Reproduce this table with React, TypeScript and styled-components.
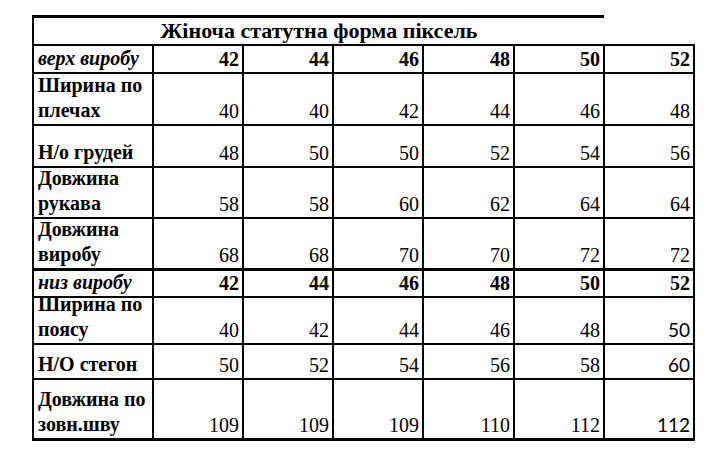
import React, { Fragment } from 'react';
import styled, { createGlobalStyle, css } from 'styled-components';

const GlobalStyle = createGlobalStyle`
    html, body {
        margin: 0;
        padding: 0;
        background: #fff;
        font-family: "Liberation Serif", "Times New Roman", serif;
        color: #000;
    }
`;

const Page = styled.div`
    width: 720px;
    height: 453px;
    padding: 15px 0 0 32px;
    box-sizing: border-box;
    overflow: hidden;
`;

const Sheet = styled.div`
    display: flex;
    flex-direction: column;
    width: 663px;
`;

const TitleBar = styled.div`
    width: 572px;
    height: 29px;
    box-sizing: border-box;
    border-top: 3px solid #000;
    border-left: 2px solid #000;
    display: flex;
    align-items: flex-end;
    justify-content: center;
    padding-bottom: 1px;
    font-weight: bold;
    font-size: 22px;
    line-height: 24px;
`;

// black background shows through the gaps as the cell borders
const Grid = styled.div`
    display: grid;
    grid-template-columns: 118px 88px 88px 88px 89px 88px 88px;
    grid-template-rows: 26px 50px 40px 49px 49px 26px 45px 33px 58px;
    gap: 2px;
    padding: 2px 2px 3px 2px;
    background: #000;
`;

const cellBase = css<{ $thickTop?: boolean }>`
    background: #fff;
    display: flex;
    align-items: flex-end;
    box-sizing: border-box;
    border-top: ${(p) => (p.$thickTop ? '1px solid #000' : 'none')};
`;

const LabelCell = styled.div<{ $italic?: boolean; $thickTop?: boolean }>`
    ${cellBase}
    padding: 0 2px 1px 4px;
    font-weight: bold;
    font-style: ${(p) => (p.$italic ? 'italic' : 'normal')};
    font-size: 20px;
    line-height: 25px;
`;

const NumCell = styled.div<{ $bold?: boolean; $sans?: boolean; $thickTop?: boolean }>`
    ${cellBase}
    justify-content: flex-end;
    padding: 0 3px 1px 0;
    font-weight: ${(p) => (p.$bold ? 'bold' : 'normal')};
    font-size: 20px;
    line-height: 24px;
    ${(p) =>
        p.$sans &&
        css`
            font-family: Lato, "Open Sans", sans-serif;
            font-size: 19px;
        `}
`;

type Line = {
    label: string;
    values: number[];
    head?: boolean;
    thickTop?: boolean;
    sansLast?: boolean;
};

const sizes = [42, 44, 46, 48, 50, 52];

const lines: Line[] = [
    { label: 'верх виробу', values: sizes, head: true },
    { label: 'Ширина по плечах', values: [40, 40, 42, 44, 46, 48] },
    { label: 'Н/о грудей', values: [48, 50, 50, 52, 54, 56] },
    { label: 'Довжина рукава', values: [58, 58, 60, 62, 64, 64] },
    { label: 'Довжина виробу', values: [68, 68, 70, 70, 72, 72] },
    { label: 'низ виробу', values: sizes, head: true, thickTop: true },
    { label: 'Ширина по поясу', values: [40, 42, 44, 46, 48, 50], sansLast: true },
    { label: 'Н/О стегон', values: [50, 52, 54, 56, 58, 60], sansLast: true },
    { label: 'Довжина по зовн.шву', values: [109, 109, 109, 110, 112, 112], sansLast: true }
];

const App = () => (
    <>
        <GlobalStyle />
        <Page>
            <Sheet>
                <TitleBar>Жіноча статутна форма піксель</TitleBar>
                <Grid>
                    {lines.map((line) => (
                        <Fragment key={line.label}>
                            <LabelCell $italic={line.head} $thickTop={line.thickTop}>
                                {line.label}
                            </LabelCell>
                            {line.values.map((v, j) => (
                                <NumCell
                                    key={j}
                                    $bold={line.head}
                                    $thickTop={line.thickTop}
                                    $sans={line.sansLast && j === line.values.length - 1}
                                >
                                    {v}
                                </NumCell>
                            ))}
                        </Fragment>
                    ))}
                </Grid>
            </Sheet>
        </Page>
    </>
);

export default App;
